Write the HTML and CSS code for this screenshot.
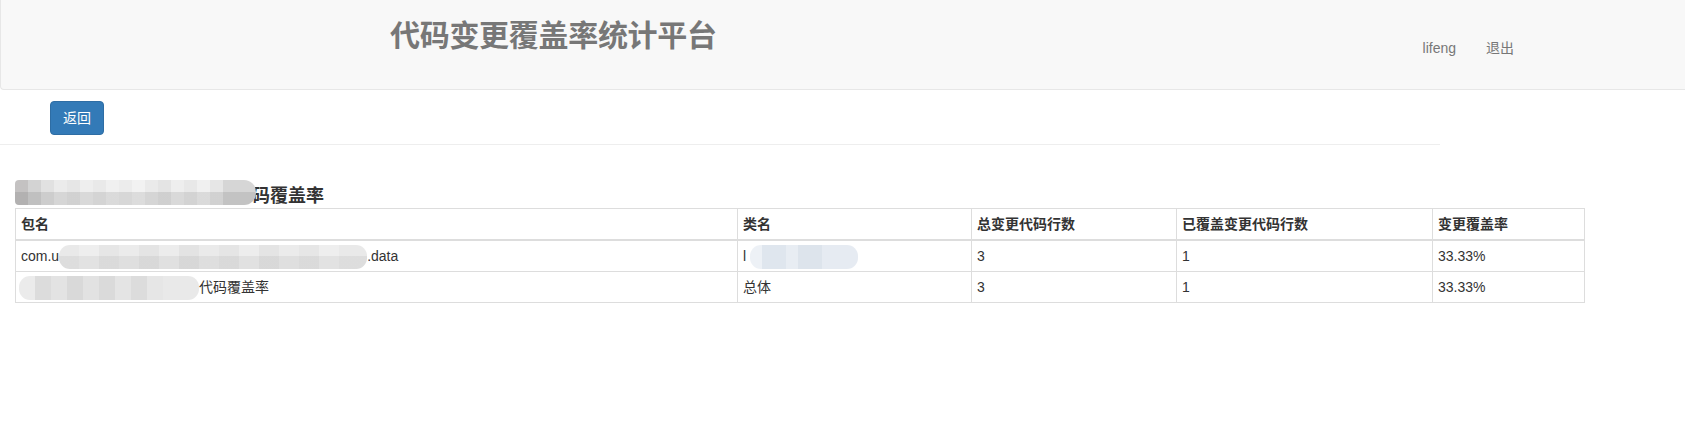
FILE: index.html
```html
<!DOCTYPE html>
<html lang="zh-CN">
<head>
<meta charset="utf-8">
<title>代码变更覆盖率统计平台</title>
<link rel="stylesheet" href="styles.css">
</head>
<body>
<div class="page">
  <header class="navbar">
    <h1 class="brand">代码变更覆盖率统计平台</h1>
    <ul class="nav">
      <li><a href="#">lifeng</a></li>
      <li><a href="#">退出</a></li>
    </ul>
  </header>

  <div class="toolbar">
    <button class="btn btn-primary" type="button">返回</button>
  </div>
  <hr class="divider">

  <section class="report">
    <h4 class="report-title"><span class="blur blur-title"></span><span class="title-text">码覆盖率</span></h4>
    <table class="table">
      <colgroup>
        <col class="c-pkg">
        <col class="c-cls">
        <col class="c-total">
        <col class="c-covered">
        <col class="c-rate">
      </colgroup>
      <thead>
        <tr>
          <th>包名</th>
          <th>类名</th>
          <th>总变更代码行数</th>
          <th>已覆盖变更代码行数</th>
          <th>变更覆盖率</th>
        </tr>
      </thead>
      <tbody>
        <tr>
          <td>com.u<span class="blur blur-pkg"></span>.data</td>
          <td>l<span class="blur blur-cls"></span></td>
          <td>3</td>
          <td>1</td>
          <td>33.33%</td>
        </tr>
        <tr>
          <td><span class="blur blur-sum"></span>代码覆盖率</td>
          <td>总体</td>
          <td>3</td>
          <td>1</td>
          <td>33.33%</td>
        </tr>
      </tbody>
    </table>
  </section>
</div>
</body>
</html>
```

FILE: styles.css
```css
* { box-sizing: border-box; }

html, body {
  margin: 0;
  padding: 0;
  background: #fff;
}

body {
  font-family: "Liberation Sans", Arial, "Noto Sans CJK SC", sans-serif;
  font-size: 14px;
  line-height: 20px;
  color: #333;
  overflow-x: hidden;
}

.page {
  width: 1685px;
}

/* ---------- navbar ---------- */
.navbar {
  display: flex;
  align-items: flex-start;
  height: 90px;
  background: #f8f8f8;
  border: 1px solid #e7e7e7;
  border-right: none;
  border-top: none;
  border-radius: 0 0 0 4px;
}

.brand {
  margin: 0 0 0 389px;
  padding-top: 16px;
  font-family: "Noto Sans CJK SC", "Liberation Sans", sans-serif;
  font-size: 30px;
  line-height: 34px;
  font-weight: 700;
  color: #777;
  letter-spacing: -0.3px;
}

.nav {
  display: flex;
  list-style: none;
  margin: 23px 156px 0 auto;
  padding: 0;
}

.nav a {
  display: block;
  padding: 15px;
  line-height: 20px;
  color: #777;
  text-decoration: none;
}

/* ---------- toolbar ---------- */
.toolbar {
  padding: 11px 0 0 50px;
}

.btn {
  display: inline-block;
  padding: 6px 12px;
  font-family: inherit;
  font-size: 14px;
  line-height: 20px;
  border: 1px solid transparent;
  border-radius: 4px;
  cursor: pointer;
}

.btn-primary {
  color: #fff;
  background: #337ab7;
  border-color: #2e6da4;
}

.divider {
  width: 1440px;
  margin: 9px 0 0 0;
  border: 0;
  border-top: 1px solid #eee;
}

/* ---------- report ---------- */
.report {
  padding: 35px 0 0 15px;
}

.report-title {
  display: flex;
  align-items: flex-end;
  height: 25px;
  margin: 0 0 3px 0;
  font-size: 18px;
  line-height: 22px;
  font-weight: 700;
  color: #333;
}

.title-text {
  margin-left: -4px;
  font-family: "Noto Sans CJK SC", "Liberation Sans", sans-serif;
}

.report-title .blur-title {
  position: relative;
  z-index: 1;
  align-self: flex-start;
}

.table {
  width: 1569px;
  table-layout: fixed;
  border-collapse: collapse;
  border: 1px solid #ddd;
}

.c-pkg { width: 722px; }
.c-cls { width: 234px; }
.c-total { width: 205px; }
.c-covered { width: 256px; }
.c-rate { width: 152px; }

.table th,
.table td {
  padding: 5px;
  border: 1px solid #ddd;
  text-align: left;
  vertical-align: top;
  line-height: 20px;
  height: 31px;
  white-space: nowrap;
  overflow: hidden;
}

.table th {
  font-weight: 700;
  border-bottom-width: 2px;
}

/* ---------- mosaic redactions ---------- */
.blur {
  display: inline-block;
  vertical-align: middle;
  border-radius: 11px;
}

.table .blur {
  margin-top: -6px;
  margin-bottom: -6px;
}

.blur-title {
  width: 241px;
  height: 25px;
  border-radius: 4px 12px 12px 4px;
  background:
    linear-gradient(to bottom, rgba(255,255,255,0) 50%, rgba(0,0,0,0.09) 50%),
    linear-gradient(to right,
      #c4c2c2 0 13px, #d3d3d3 13px 26px, #e1e1e1 26px 39px, #ebebeb 39px 52px,
      #e6e6e6 52px 65px, #eeeeee 65px 78px, #e9e9e9 78px 91px, #f0f0f0 91px 104px,
      #ececec 104px 117px, #f2f2f2 117px 130px, #eaeaea 130px 143px, #e4e4e4 143px 156px,
      #eeeeee 156px 169px, #e8e8e8 169px 182px, #f0f0f0 182px 195px, #e6e6e6 195px 208px,
      #d6d6d6 208px 241px);
}

.blur-pkg {
  width: 308px;
  height: 24px;
  background:
    linear-gradient(to bottom, rgba(255,255,255,0) 45%, rgba(0,0,0,0.05) 45%),
    linear-gradient(to right,
      #e9e9e9 0 20px, #eeeeee 20px 40px, #e6e6e6 40px 60px, #ebebeb 60px 80px,
      #e4e4e4 80px 100px, #ececec 100px 120px, #e3e3e3 120px 140px, #eaeaea 140px 160px,
      #e5e5e5 160px 180px, #ededed 180px 200px, #e4e4e4 200px 220px, #ebebeb 220px 240px,
      #e6e6e6 240px 260px, #eeeeee 260px 280px, #e9e9e9 280px 308px);
}

.blur-cls {
  width: 108px;
  height: 24px;
  margin-left: 4px;
  background:
    linear-gradient(to right,
      #edf1f6 0 12px, #dfe6ee 12px 36px, #e8edf3 36px 48px, #dde4ec 48px 72px,
      #e6ebf2 72px 108px);
}

.blur-sum {
  width: 180px;
  height: 24px;
  margin-left: -2px;
  background:
    linear-gradient(to right,
      #ebebeb 0 16px, #dcdcdc 16px 32px, #e3e3e3 32px 48px, #d9d9d9 48px 64px,
      #e2e2e2 64px 80px, #dadada 80px 96px, #e4e4e4 96px 112px, #dcdcdc 112px 128px,
      #e6e6e6 128px 144px, #e9e9e9 144px 180px);
}
```
